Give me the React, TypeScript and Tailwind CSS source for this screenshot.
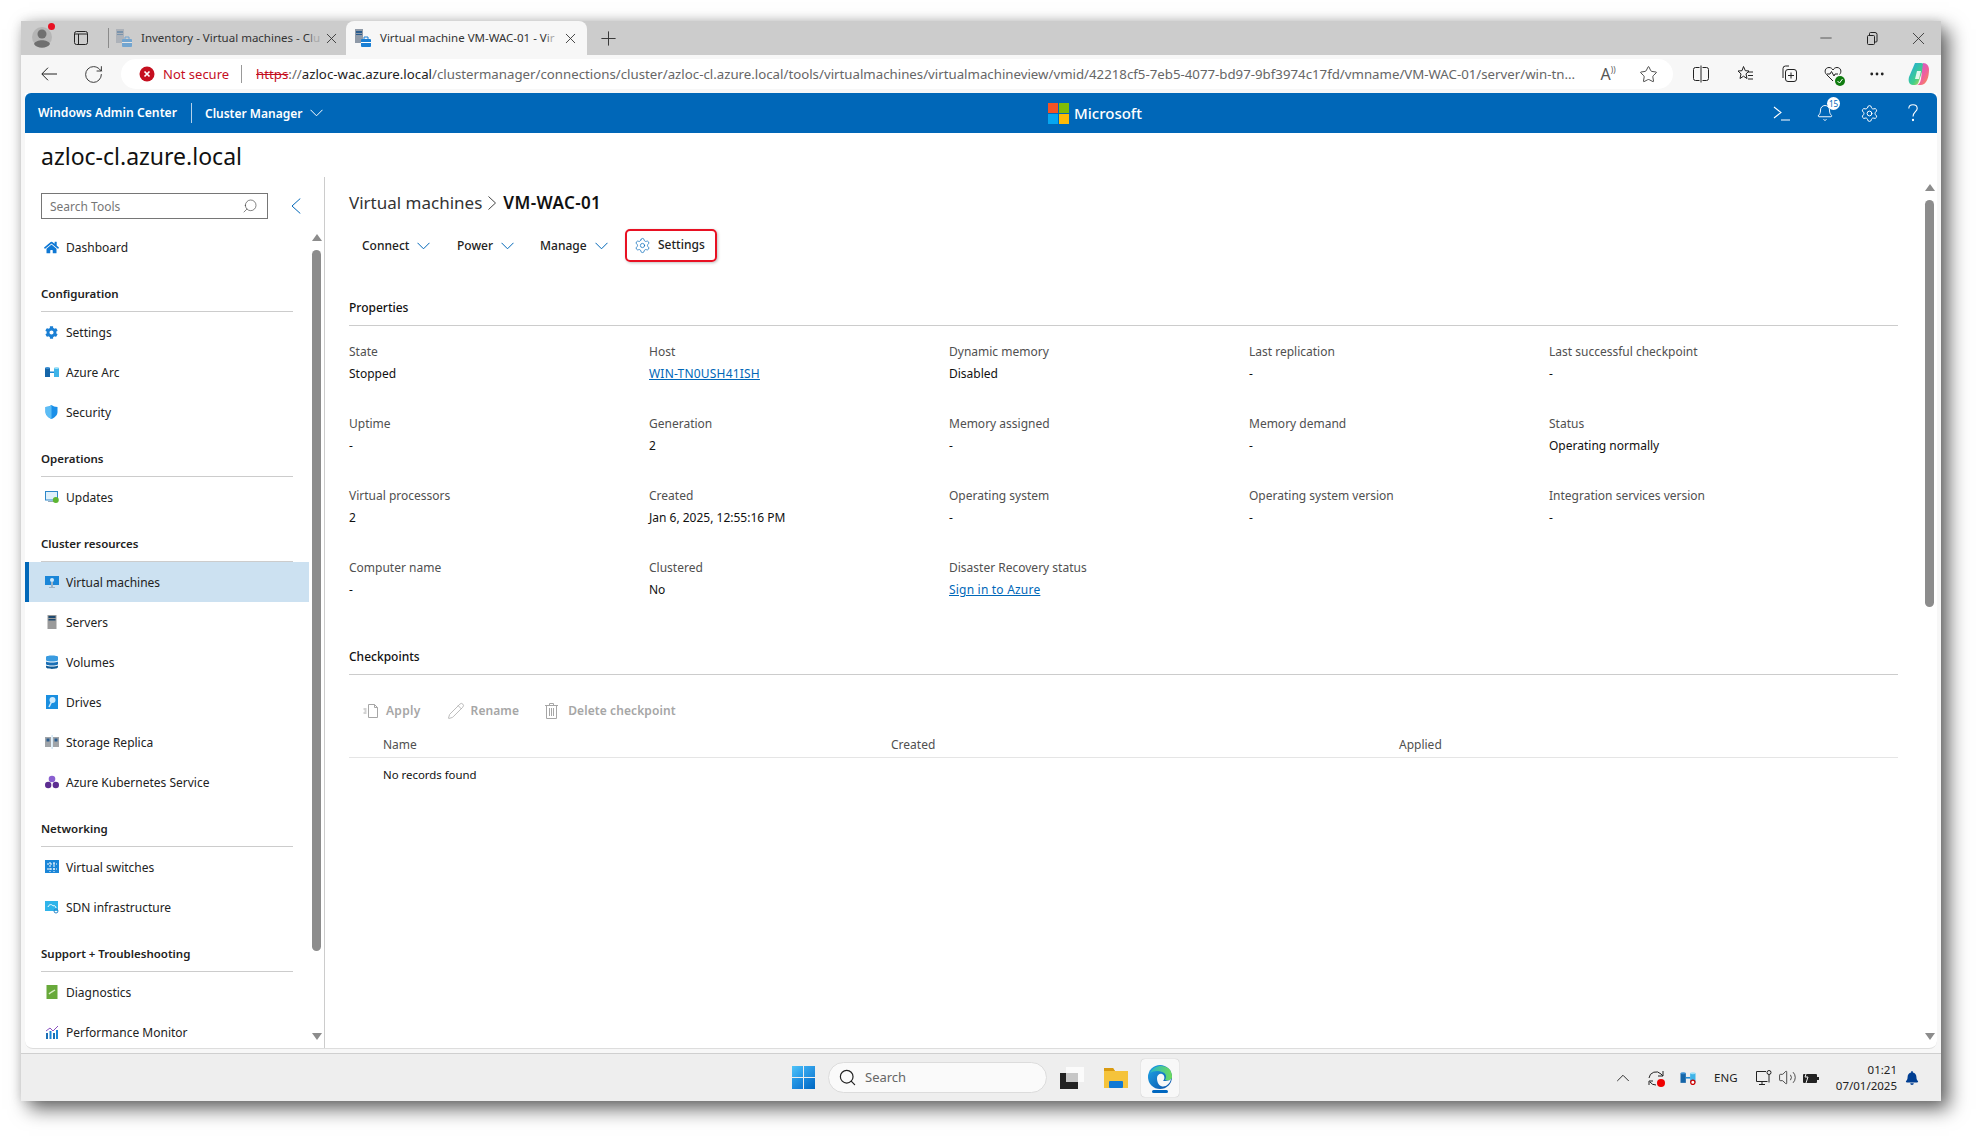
import { RotateCw, Star, X, Plus, Minus, ChevronUp, Search, Settings, Bell, MoreHorizontal, Volume2, Pencil } from "lucide-react";
import { FaCog, FaHome, FaBell } from "react-icons/fa";

const font = "font-['Noto_Sans',sans-serif]";

function TabIcon() {
  return (
    <svg width="18" height="20" viewBox="0 0 18 20">
      <rect x="1" y="1" width="8" height="14" fill="#8f9aa8" />
      <rect x="2" y="3" width="6" height="2" fill="#2a5d8f" />
      <rect x="2" y="6" width="6" height="1" fill="#2a5d8f" />
      <rect x="7" y="11" width="10" height="8" rx="1" fill="#1a7fd4" />
      <path d="M10 11V9h4v2" fill="none" stroke="#1a7fd4" />
      <rect x="7" y="14" width="10" height="1" fill="#fff" />
    </svg>
  );
}

function Cylinder({ x }: { x: number }) {
  return (
    <g>
      <rect x={x} y="3" width="5" height="9" fill={x < 6 ? "#1565a8" : "#3fb4e8"} />
      <ellipse cx={x + 2.5} cy="3" rx="2.5" ry="1" fill={x < 6 ? "#3a8fd4" : "#9fe0f8"} />
    </g>
  );
}

// thin down chevron used in the app header and the command bar
function Chev({ className }: { className?: string }) {
  return (
    <svg width="13" height="8" viewBox="0 0 13 8" fill="none" stroke="currentColor" className={className}>
      <path d="M.5 .8l6 6 6-6" />
    </svg>
  );
}

const toolIcons: Record<string, React.ReactNode> = {
  Dashboard: <FaHome size={15} color="#0f78d4" />,
  Settings: <FaCog size={13} color="#1a7fd4" />,
  "Azure Arc": (
    <svg width="14" height="14" viewBox="0 0 14 14">
      <Cylinder x={0} />
      <Cylinder x={9} />
      <rect x="5" y="6.5" width="4" height="1.5" fill="#1e88d4" />
    </svg>
  ),
  Security: (
    <svg width="13" height="14" viewBox="0 0 13 14">
      <path d="M6.5 0C5 1.2 3 2 .5 2v5c0 3 2.5 5.5 6 7 3.5-1.5 6-4 6-7V2C10 2 8 1.2 6.5 0z" fill="#1a8fe8" />
      <path d="M6.5 0v14C3 12.500.5 10 .5 7V2C3 2 5 1.2 6.500 0z" fill="#5cbdf5" />
    </svg>
  ),
  Updates: (
    <svg width="14" height="14" viewBox="0 0 14 14">
      <rect x=".5" y="1.500" width="12" height="8.500" fill="#dff0fa" stroke="#2d87c9" />
      <rect x="3" y="11" width="6" height="1" fill="#9ab" />
      <circle cx="10.800" cy="10" r="3" fill="#5cb531" />
    </svg>
  ),
  "Virtual machines": (
    <svg width="14" height="14" viewBox="0 0 14 14">
      <rect x="0" y="1" width="14" height="9" fill="#1a86d8" />
      <circle cx="7" cy="5" r="2" fill="#cfeafc" />
      <rect x="6" y="7" width="2" height="5" fill="#9fb3c4" />
      <rect x="4" y="12" width="6" height="1" fill="#9fb3c4" />
    </svg>
  ),
  Servers: (
    <svg width="10" height="14" viewBox="0 0 10 14">
      <rect width="9" height="14" x=".5" fill="#9a9a9a" />
      <rect x="1.500" y="1" width="7" height="2" fill="#1f4a70" />
      <rect x="1.500" y="4" width="7" height="1.500" fill="#1f4a70" />
    </svg>
  ),
  Volumes: (
    <svg width="12" height="14" viewBox="0 0 12 14">
      <path d="M0 2c0-2 12-2 12 0v3c0 2-12 2-12 0z" fill="#3a9be0" />
      <path d="M0 6.500c2 1.300 10 1.300 12 0V9c0 2-12 2-12 0z" fill="#1a6fb5" />
      <path d="M0 10.500c2 1.300 10 1.300 12 0V12c0 2.500-12 2.500-12 0z" fill="#0f5a96" />
    </svg>
  ),
  Drives: (
    <svg width="12" height="14" viewBox="0 0 12 14">
      <rect width="12" height="14" fill="#1a8fe0" />
      <circle cx="6.500" cy="5" r="3" fill="#cfeafc" />
      <path d="M5.500 7L3 12" stroke="#cfeafc" strokeWidth="1.500" />
    </svg>
  ),
  "Storage Replica": (
    <svg width="14" height="14" viewBox="0 0 14 14">
      <rect y="2" width="6" height="10" fill="#a0a4a8" />
      <rect x="8" y="2" width="6" height="10" fill="#a0a4a8" />
      <rect x="1.500" y="3.500" width="3" height="3" fill="#2a5d8f" />
      <rect x="9.500" y="3.500" width="3" height="3" fill="#2a5d8f" />
      <rect x="6.800" y="0" width=".5" height="14" fill="#7fb8e0" />
    </svg>
  ),
  "Azure Kubernetes Service": (
    <svg width="14" height="14" viewBox="0 0 14 14">
      <circle cx="7" cy="4" r="3.300" fill="#8a5fd0" />
      <circle cx="3.200" cy="10" r="3.200" fill="#5c2d91" />
      <circle cx="10.800" cy="10" r="3.200" fill="#5c2d91" />
    </svg>
  ),
  "Virtual switches": (
    <svg width="14" height="14" viewBox="0 0 14 14">
      <rect width="14" height="13" fill="#1a86d8" />
      <path d="M2 4h10M2 9h10M5 2v10M9 2v10" stroke="#fff" strokeWidth="1" strokeDasharray="2 1" />
    </svg>
  ),
  "SDN infrastructure": (
    <svg width="14" height="14" viewBox="0 0 14 14">
      <rect width="13" height="10" y="1" fill="#2fb4ea" />
      <path d="M3 7c1-3 4-3 5-1 1-1 3 0 3 2" stroke="#fff" fill="none" />
      <circle cx="11" cy="11" r="2" fill="none" stroke="#2d87c9" />
    </svg>
  ),
  Diagnostics: (
    <svg width="12" height="14" viewBox="0 0 12 14">
      <rect width="11" height="14" x=".5" fill="#68a93a" />
      <path d="M3 9c2-2 3-2 6-4" stroke="#d9efc5" strokeWidth="1.500" fill="none" />
    </svg>
  ),
  "Performance Monitor": (
    <svg width="12" height="14" viewBox="0 0 12 14">
      <rect y="8" width="2" height="6" fill="#1a6fb5" />
      <rect x="3.500" y="6" width="2" height="8" fill="#1a86d8" />
      <rect x="7" y="8" width="2" height="6" fill="#1a6fb5" />
      <rect x="10" y="5" width="2" height="9" fill="#1a86d8" />
      <path d="M0 6l4-3 3 3 5-5" stroke="#8a4fc0" fill="none" />
    </svg>
  ),
};

const sections = [
  { title: "", items: ["Dashboard"] },
  { title: "Configuration", items: ["Settings", "Azure Arc", "Security"] },
  { title: "Operations", items: ["Updates"] },
  { title: "Cluster resources", items: ["Virtual machines", "Servers", "Volumes", "Drives", "Storage Replica", "Azure Kubernetes Service"] },
  { title: "Networking", items: ["Virtual switches", "SDN infrastructure"] },
  { title: "Support + Troubleshooting", items: ["Diagnostics", "Performance Monitor"] },
];

const properties = [
  ["State", "Stopped"], ["Host", "WIN-TN0USH41ISH"], ["Dynamic memory", "Disabled"], ["Last replication", "-"], ["Last successful checkpoint", "-"],
  ["Uptime", "-"], ["Generation", "2"], ["Memory assigned", "-"], ["Memory demand", "-"], ["Status", "Operating normally"],
  ["Virtual processors", "2"], ["Created", "Jan 6, 2025, 12:55:16 PM"], ["Operating system", "-"], ["Operating system version", "-"], ["Integration services version", "-"],
  ["Computer name", "-"], ["Clustered", "No"], ["Disaster Recovery status", "Sign in to Azure"],
];

function TabStrip() {
  return (
    <div className="flex h-[34px] shrink-0 items-center bg-[#cccccc] text-[11.5px] text-[#333]">
      <div className="flex w-[42px] justify-center">
        <div className="relative">
          <svg width="20" height="24" viewBox="0 0 20 24">
            <circle cx="10" cy="11" r="10" fill="#b5b5b5" />
            <circle cx="10" cy="8" r="4.500" fill="#6f6f6f" />
            <path d="M2 18c2-5 14-5 16 0-3 5-13 5-16 0z" fill="#6f6f6f" />
          </svg>
          <span className="absolute right-[-3px] top-[-3px] h-[7px] w-[7px] rounded-full bg-[#e81123]" />
        </div>
      </div>
      <div className="flex w-[36px] justify-center">
        <svg width="14" height="14" viewBox="0 0 14 14" fill="none" stroke="#222">
          <rect x=".5" y=".5" width="13" height="13" rx="2" />
          <path d="M4.500 3v11M.5 3h13" />
        </svg>
      </div>
      <div className="ml-[9px] h-[20px] w-px bg-[#8a8a8a]" />
      <div className="flex w-[237px] items-center pl-[6px]">
        <span className="w-[16px] opacity-50"><TabIcon /></span>
        <span className="ml-[10px] w-[177px] whitespace-nowrap">Inventory - Virtual machines - C<span className="text-[#777]">l</span><span className="text-[#aaa]">u</span></span>
        <X size={17} strokeWidth={1.25} className="ml-[5px] shrink-0" />
      </div>
      <div className="flex h-full w-[241px] items-center rounded-t-[8px] bg-[#f7f7f7] pl-[8px]">
        <span className="w-[16px]"><TabIcon /></span>
        <span className="ml-[10px] w-[178px] whitespace-nowrap">Virtual machine VM-WAC-01 - V<span className="text-[#777]">i</span><span className="text-[#aaa]">r</span></span>
        <X size={17} strokeWidth={1.25} className="ml-[4px] shrink-0" />
      </div>
      <div className="flex w-[42px] justify-center">
        <Plus size={23} strokeWidth={1} />
      </div>
      <div className="flex-1" />
      <div className="flex w-[46px] justify-center"><Minus size={18} strokeWidth={1} /></div>
      <div className="flex w-[46px] justify-center">
        <svg width="12" height="13" viewBox="0 0 12 13" fill="none" stroke="#222">
          <rect x="1.500" y="3.500" width="7" height="9" rx="1" />
          <path d="M3.500 3V1.500a1 1 0 0 1 1-1H9a2 2 0 0 1 2 2V9a1 1 0 0 1-1 1H9" />
        </svg>
      </div>
      <div className="flex w-[46px] justify-center"><X size={21} strokeWidth={1} /></div>
    </div>
  );
}

function AddressBar() {
  return (
    <div className="flex h-[38px] shrink-0 items-center bg-[#f7f7f7] text-[#222]">
      <div className="flex w-[56px] justify-center">
        <svg width="16" height="14" viewBox="0 0 16 14" fill="none" stroke="#222">
          <path d="M16 7H1M7 .7L.8 7 7 13.300" />
        </svg>
      </div>
      <div className="flex w-[32px] justify-center"><RotateCw size={21} strokeWidth={1} /></div>
      <div className="ml-[12px] flex h-[30px] w-[1552px] items-center rounded-full bg-white pl-[18px] text-[13px]">
        <svg width="16" height="16" viewBox="0 0 16 16" className="shrink-0">
          <circle cx="8" cy="8" r="7.500" fill="#c50f1f" />
          <path d="M5.500 5.500l5 5m0-5l-5 5" stroke="#fff" strokeWidth="1.700" />
        </svg>
        <span className="ml-[8px] whitespace-nowrap pt-px text-[#c50f1f]">Not secure</span>
        <span className="ml-[12px] h-[18px] w-px shrink-0 bg-[#999]" />
        <div className="ml-[14px] w-[1319px] shrink-0 whitespace-nowrap pt-px text-[13.25px] text-[#666]">
          <span className="text-[#c50f1f] line-through">https</span>
          ://<span className="text-[#222]">azloc-wac.azure.local</span>
          /clustermanager/connections/cluster/azloc-cl.azure.local/tools/virtualmachines/virtualmachineview/vmid/42218cf5-7eb5-4077-bd97-9bf3974c17fd/vmname/VM-WAC-01/server/win-tn...
        </div>
        <div className="ml-[24px] flex w-[18px] shrink-0 items-start justify-center text-[16px] leading-none text-[#555]">
          A<span className="text-[8px]">))</span>
        </div>
        <Star size={19} strokeWidth={1} className="ml-[22px] shrink-0" />
      </div>
      <div className="flex w-[6px]" />
      <div className="flex w-[44px] justify-center">
        <svg width="16" height="18" viewBox="0 0 16 18" fill="none" stroke="#222">
          <path d="M6.500 2.500h-4a2 2 0 0 0-2 2v9a2 2 0 0 0 2 2h4M9.500 2.500h4a2 2 0 0 1 2 2v9a2 2 0 0 1-2 2h-4M8 .5v17" />
        </svg>
      </div>
      <div className="flex w-[44px] justify-center">
        <svg width="18" height="18" viewBox="0 0 18 18" fill="none" stroke="#222">
          <path d="M7.500 1.500l1.800 4.200 3.700.3-3 2.900 1 4.600-3.500-2.300L4 13.500l1-4.600-3-2.900 4-.3z" />
          <path d="M12 7h5M12 10.500h5M12 14h5" />
        </svg>
      </div>
      <div className="flex w-[44px] justify-center">
        <svg width="18" height="18" viewBox="0 0 18 18" fill="none" stroke="#222">
          <path d="M3 13V3.500A2.500 2.500 0 0 1 5.500 1H9" />
          <rect x="5.500" y="4.500" width="11" height="12" rx="2.500" />
          <path d="M11 7.500v6M8 10.500h6" />
        </svg>
      </div>
      <div className="flex w-[44px] justify-center">
        <div className="relative">
          <svg width="18" height="18" viewBox="0 0 18 18" fill="none" stroke="#222">
            <path d="M9 16L2.500 9.500C0 7 1 2.500 5 2.500c2 0 3 1 4 2.500 1-1.500 2-2.500 4-2.500 4 0 5 4.500 2.500 7" />
            <path d="M3 9h3l1.500-2.500L10 11l1-2h3" />
          </svg>
          <span className="absolute bottom-[-3px] right-[-3px] flex h-[10px] w-[10px] items-center justify-center rounded-full bg-[#107c10]">
            <svg width="6" height="6" viewBox="0 0 6 6"><path d="M.5 3l2 2 3-4" stroke="#fff" fill="none" /></svg>
          </span>
        </div>
      </div>
      <div className="flex w-[44px] justify-center"><MoreHorizontal size={18} strokeWidth={1.75} /></div>
      <div className="flex w-[40px] justify-center">
        <svg width="22" height="24" viewBox="0 0 22 24">
          <defs>
            <linearGradient id="cp1" x1="0" y1="0" x2="1" y2="1">
              <stop offset="0" stopColor="#1fa5e8" />
              <stop offset=".6" stopColor="#3fd08a" />
              <stop offset="1" stopColor="#f7d23e" />
            </linearGradient>
            <linearGradient id="cp2" x1="0" y1="0" x2="1" y2="1">
              <stop offset="0" stopColor="#c05ae8" />
              <stop offset=".6" stopColor="#f0609a" />
              <stop offset="1" stopColor="#f79a3e" />
            </linearGradient>
          </defs>
          <path d="M7 1h6c2 0 3 1 3 3l-5 15c-1 3-2 4-4 4H5C1 23 0 19 1 15z" fill="url(#cp1)" />
          <path d="M15 1c4 0 6 3 6 7 0 6-2 15-8 15H8c3 0 4-2 5-6z" fill="url(#cp2)" />
          <path d="M9 9h4l-2 8H7z" fill="#fff" opacity=".85" />
        </svg>
      </div>
    </div>
  );
}

function AppHeader() {
  return (
    <div className="flex h-[40px] shrink-0 items-center rounded-t-[6px] bg-[#0067b8] pl-[13px] pr-[2px] text-white">
      <span className="w-[140px] whitespace-nowrap pt-px text-[12.2px] font-semibold">Windows Admin Center</span>
      <span className="ml-[13px] h-[20px] w-px bg-white/70" />
      <span className="ml-[13px] w-[97px] whitespace-nowrap pt-px text-[12px] font-semibold">Cluster Manager</span>
      <Chev className="ml-[8px]" />
      <div className="ml-[725px] grid grid-cols-2 gap-px">
        <span className="h-[10px] w-[10px] bg-[#f35325]" />
        <span className="h-[10px] w-[10px] bg-[#81bc06]" />
        <span className="h-[10px] w-[10px] bg-[#05a6f0]" />
        <span className="h-[10px] w-[10px] bg-[#ffba08]" />
      </div>
      <span className="ml-[5px] text-[15px] font-medium">Microsoft</span>
      <div className="flex-1" />
      <div className="flex w-[44px] justify-center">
        <svg width="17" height="15" viewBox="0 0 17 15" fill="none" stroke="#fff" strokeWidth="1.100">
          <path d="M1 1l7 5.500L1 12M8 14h9" />
        </svg>
      </div>
      <div className="flex w-[44px] justify-center">
        <div className="relative">
          <Bell size={18} strokeWidth={1.25} />
          <span className="absolute right-[-6px] top-[-7px] flex h-[13px] w-[13px] items-center justify-center rounded-full bg-white text-[8px] text-[#0067b8]">15</span>
        </div>
      </div>
      <div className="flex w-[44px] justify-center"><Settings size={19} strokeWidth={1.25} /></div>
      <div className="flex w-[44px] justify-center">
        <svg width="10" height="18" viewBox="0 0 10 18" fill="none" stroke="#fff" strokeWidth="1.100">
          <path d="M.8 4.500C.8 2 2.700.7 5 .7s4.200 1.500 4.200 3.700C9.200 7.500 5 8 5 12.500" />
          <circle cx="5" cy="16" r=".6" fill="#fff" />
        </svg>
      </div>
    </div>
  );
}

function Sidebar() {
  return (
    <aside className="flex w-[300px] shrink-0 flex-col border-r border-[#cccccc]">
      <div className="h-[50px] shrink-0 pl-[16px] pt-[16px]">
        <div className="flex h-[26px] items-center">
          <div className="flex h-[26px] w-[227px] items-center justify-between border border-[#767676] pl-[8px] pr-[9px] text-[12px] text-[#767676]">
            <span className="pt-[2px]">Search Tools</span>
            <Search size={16} strokeWidth={0.9} className="-scale-x-100 text-[#333]" />
          </div>
          <svg width="10" height="16" viewBox="0 0 10 16" fill="none" stroke="#0067b8" className="ml-[23px]">
            <path d="M9.300 .5L1 8l8.300 7.500" />
          </svg>
        </div>
      </div>
      <div className="flex min-h-0 flex-1">
        <nav className="w-[284px] shrink-0 overflow-hidden">
          {sections.map((s) => (
            <div key={s.items[0]}>
              {s.title && (
                <div className="mx-[16px] h-[45px] border-b border-[#cccccc] pt-[17px] text-[11.5px] font-semibold leading-[20px] text-[#222]">
                  {s.title}
                </div>
              )}
              {s.items.map((name) => {
                const active = name === "Virtual machines";
                return (
                  <div
                    key={name}
                    className={
                      active
                        ? "flex h-[40px] items-center border-l-4 border-[#0067b8] bg-[#cce1f1] pl-[12px] text-[12px] text-[#222]"
                        : "flex h-[40px] items-center pl-[16px] text-[12px] text-[#222]"
                    }
                  >
                    <span className="flex w-[21px] justify-center">{toolIcons[name]}</span>
                    <span className="ml-[4px] whitespace-nowrap pt-[2px]">{name}</span>
                  </div>
                );
              })}
            </div>
          ))}
        </nav>
        <div className="ml-[3px] flex w-[9px] flex-col items-center">
          <span className="mt-[7px] h-0 w-0 border-x-[5px] border-b-[7px] border-x-transparent border-b-[#8c8c8c]" />
          <span className="mt-[9px] h-[701px] w-[9px] rounded-full bg-[#8c8c8c]" />
          <span className="mb-[8px] mt-auto h-0 w-0 border-x-[5px] border-t-[7px] border-x-transparent border-t-[#8c8c8c]" />
        </div>
      </div>
    </aside>
  );
}

function ToolMenu({ label, width }: { label: string; width: string }) {
  return (
    <div className={`flex items-center pt-px ${width}`}>
      <span className="font-medium">{label}</span>
      <Chev className="ml-[8px] text-[#0067b8]" />
    </div>
  );
}

function Main() {
  return (
    <main className="flex min-w-0 flex-1">
      <div className="w-[1573px] shrink-0 pl-[24px] text-[12px] text-[#222]">
        <div className="flex h-[50px] items-center text-[17px] leading-none">
          <span className="text-[#333]">Virtual machines</span>
          <svg width="8" height="14" viewBox="0 0 8 14" fill="none" stroke="#444" className="ml-[6px] mt-[2px]">
            <path d="M.5 .5L7.500 7 .5 13.500" />
          </svg>
          <span className="ml-[7px] font-semibold tracking-[0.4px] text-[#111]">VM-WAC-01</span>
        </div>
        <div className="flex h-[36px] items-center pl-[13px]">
          <ToolMenu label="Connect" width="w-[95px]" />
          <ToolMenu label="Power" width="w-[83px]" />
          <ToolMenu label="Manage" width="w-[85px]" />
          <div className="flex h-[33px] w-[92px] items-center rounded-[5px] border-2 border-[#e81123] pl-[7px] font-medium shadow-[1px_1px_3px_rgba(0,0,0,0.25)]">
            <Settings size={17} strokeWidth={1} className="text-[#0067b8]" />
            <span className="ml-[7px]">Settings</span>
          </div>
        </div>
        <div className="mt-[34px] h-[29px] border-b border-[#cccccc] pt-px text-[12px] font-medium leading-[20px] text-[#111]">Properties</div>
        <div className="grid grid-cols-[300px_300px_300px_300px_300px] pt-[16px]">
          {properties.map(([label, value]) => (
            <div key={label} className="h-[72px]">
              <div className="h-[20px] leading-[20px] text-[#505050]">{label}</div>
              {value === "WIN-TN0USH41ISH" || value === "Sign in to Azure" ? (
                <div className="mt-[2px] h-[20px] leading-[20px] tracking-[0.2px] text-[#0067b8] underline">{value}</div>
              ) : (
                <div className="mt-[2px] h-[20px] leading-[20px] text-[#111]">{value}</div>
              )}
            </div>
          ))}
        </div>
        <div className="mt-[17px] h-[28px] border-b border-[#cccccc] text-[12px] font-medium leading-[20px] text-[#111]">Checkpoints</div>
        <div className="mt-[20px] flex h-[32px] items-center pl-[14px] font-semibold text-[#a6a6a6]">
          <svg width="16" height="16" viewBox="0 0 16 16" fill="none" stroke="#a6a6a6">
            <path d="M5.500 1.500h6l3 3v10h-9z" />
            <path d="M11.500 1.500v3h3M.5 6h3M1.500 8h2M.5 10h3" />
          </svg>
          <span className="ml-[7px] tracking-[0.3px]">Apply</span>
          <Pencil size={18} strokeWidth={1} className="ml-[26px]" />
          <span className="ml-[6px] tracking-[0.1px]">Rename</span>
          <svg width="13" height="16" viewBox="0 0 13 16" fill="none" stroke="#a6a6a6" className="ml-[26px]">
            <path d="M0 2.500h13M4.500 2.500v-2h4v2M1.500 2.500v13h10v-13M4.500 5v8M6.500 5v8M8.500 5v8" />
          </svg>
          <span className="ml-[10px] tracking-[0.1px]">Delete checkpoint</span>
        </div>
        <div className="grid h-[31px] grid-cols-[508px_508px_1fr] border-b border-[#e5e5e5] pl-[34px] pt-[8px] leading-[20px] text-[#505050]">
          <span>Name</span>
          <span>Created</span>
          <span>Applied</span>
        </div>
        <div className="mt-[7px] pl-[34px] text-[11.4px] leading-[20px] text-[#111]">No records found</div>
      </div>
      <div className="ml-[27px] flex w-[9px] flex-col items-center">
        <span className="mt-[7px] h-0 w-0 border-x-[5px] border-b-[7px] border-x-transparent border-b-[#8c8c8c]" />
        <span className="mt-[9px] h-[407px] w-[9px] rounded-full bg-[#8c8c8c]" />
        <span className="mb-[8px] mt-auto h-0 w-0 border-x-[5px] border-t-[7px] border-x-transparent border-t-[#8c8c8c]" />
      </div>
    </main>
  );
}

function Taskbar() {
  return (
    <div className="flex h-[48px] shrink-0 items-center border-t border-[#cfcfcf] bg-[#eeeeee]">
      <div className="ml-[771px] grid grid-cols-2 gap-[1px]">
        <span className="h-[11px] w-[11px] bg-gradient-to-br from-[#4fc3f7] to-[#2196e8]" />
        <span className="h-[11px] w-[11px] bg-gradient-to-br from-[#38aaf0] to-[#1a86d8]" />
        <span className="h-[11px] w-[11px] bg-gradient-to-br from-[#2a9fe8] to-[#0f78d4]" />
        <span className="h-[11px] w-[11px] bg-gradient-to-br from-[#1a8ae0] to-[#0067c0]" />
      </div>
      <div className="ml-[13px] flex h-[31px] w-[219px] items-center rounded-full border border-[#dcdcdc] bg-[#fafafa] pl-[9px] text-[13px] text-[#666]">
        <Search size={19} strokeWidth={1.5} className="text-[#222]" />
        <span className="ml-[8px]">Search</span>
      </div>
      <div className="ml-[13px] flex w-[24px] items-center">
        <svg width="24" height="24" viewBox="0 0 24 24">
          <rect x="0" y="7" width="18" height="16" fill="#222" />
          <rect x="6" y="1" width="18" height="15" fill="#fff" fillOpacity=".75" />
        </svg>
      </div>
      <div className="ml-[20px]">
        <svg width="24" height="22" viewBox="0 0 24 22">
          <path d="M0 1h9l2 3h13v17H0z" fill="#f5c33b" />
          <path d="M0 1h9l2 3H0z" fill="#d99a10" />
          <rect x="5" y="14" width="14" height="7" rx="1" fill="#0f78d4" />
        </svg>
      </div>
      <div className="ml-[13px] flex h-[38px] w-[38px] flex-col items-center rounded-[4px] bg-[#f8f8f8] pt-[6px] shadow-[0_0_1px_rgba(0,0,0,0.3)]">
        <svg width="24" height="24" viewBox="0 0 24 24">
          <defs>
            <linearGradient id="edge1" x1="0" y1="0" x2="1" y2="1">
              <stop offset="0" stopColor="#1ea7e8" />
              <stop offset="1" stopColor="#0b4fa8" />
            </linearGradient>
            <linearGradient id="edge2" x1="0" y1="0" x2="1" y2="0">
              <stop offset="0" stopColor="#28b5c9" />
              <stop offset="1" stopColor="#6fdc5a" />
            </linearGradient>
          </defs>
          <circle cx="12" cy="12" r="12" fill="url(#edge1)" />
          <path d="M2 8C5 1 14-1 20 3c3 2 4 6 4 9 0 3-4 4-7 3 2-3 1-7-3-8-4-2-9-1-12 1z" fill="url(#edge2)" />
          <path d="M9 13c0-3 3-5 5-4 3 1 3 5 1 7 3 0 6 0 8-2-1 5-6 9-10 7-3-1-4-5-4-8z" fill="#f8f8f8" />
        </svg>
        <span className="mt-[1px] h-[3px] w-[16px] rounded-full bg-[#0067c0]" />
      </div>
      <div className="ml-[438px] flex w-[12px] justify-center"><ChevronUp size={22} strokeWidth={1} className="shrink-0 text-[#222]" /></div>
      <div className="ml-[19px] relative">
        <svg width="16" height="16" viewBox="0 0 16 16" fill="none" stroke="#222">
          <path d="M1 8a7 7 0 0 1 12-4l2 2M15 1v5h-5M1 15v-4h4M2 12a7 7 0 0 0 6 3" />
        </svg>
        <span className="absolute bottom-[-1px] right-[-1px] h-[8px] w-[8px] rounded-full bg-[#f00000]" />
      </div>
      <div className="ml-[16px]">
        <svg width="16" height="15" viewBox="0 0 14 14">
          <Cylinder x={0} />
          <Cylinder x={9} />
          <rect x="5" y="6.500" width="4" height="1.500" fill="#1e88d4" />
          <circle cx="11.500" cy="11.500" r="2" fill="#fff" stroke="#c00" strokeWidth="1.200" />
        </svg>
      </div>
      <span className="ml-[18px] w-[26px] text-[11.5px] text-[#222]">ENG</span>
      <div className="ml-[16px]">
        <svg width="16" height="16" viewBox="0 0 16 16" fill="none" stroke="#222">
          <path d="M10 1.500H.5v10h11M6 11.500v3M3 14.500h6" />
          <rect x="11" y=".5" width="4" height="4" rx="2" />
          <path d="M13 4.500v8" />
        </svg>
      </div>
      <Volume2 size={19} strokeWidth={1} className="ml-[6px] text-[#222]" />
      <div className="ml-[6px]">
        <svg width="16" height="14" viewBox="0 0 16 14">
          <rect x="0" y="3" width="14" height="9" rx="1" fill="#222" />
          <rect x="14" y="6" width="2" height="3" fill="#222" />
          <path d="M4 0L2 6h3L3 12" stroke="#eee" fill="none" />
        </svg>
      </div>
      <div className="ml-[10px] w-[68px] text-right text-[11.5px] leading-[16px] text-[#222]">
        <div>01:21</div>
        <div>07/01/2025</div>
      </div>
      <div className="ml-[8px]"><FaBell size={14} color="#003e92" /></div>
    </div>
  );
}

export default function App() {
  return (
    <div className={`h-[1143px] w-[1983px] overflow-hidden bg-white pl-[21px] pt-[21px] ${font}`}>
      <div className="flex h-[1080px] w-[1920px] flex-col bg-[#f7f7f7] shadow-[8px_8px_18px_rgba(0,0,0,0.6),0_0_10px_rgba(0,0,0,0.12)]">
        <TabStrip />
        <AddressBar />
        <div className="mx-[4px] flex h-[956px] shrink-0 flex-col overflow-hidden rounded-b-[8px] border-b border-[#ddd] bg-white">
          <AppHeader />
          <div className="flex h-[44px] shrink-0 items-center pl-[16px] pt-[2px] text-[23px] leading-none text-[#111]">azloc-cl.azure.local</div>
          <div className="flex min-h-0 flex-1">
            <Sidebar />
            <Main />
          </div>
        </div>
        <div className="mt-auto"><Taskbar /></div>
      </div>
    </div>
  );
}
